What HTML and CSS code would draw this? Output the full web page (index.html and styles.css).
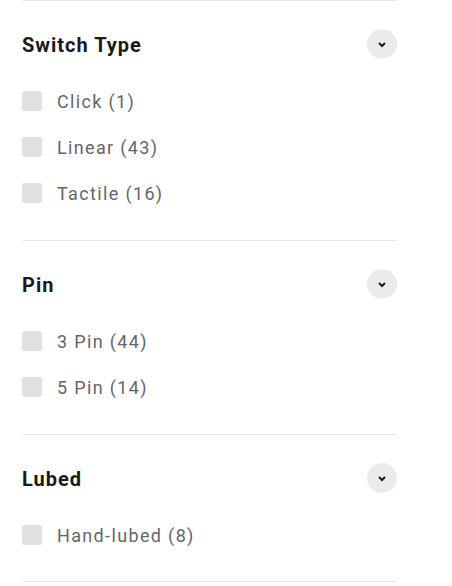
FILE: index.html
```html
<!DOCTYPE html>
<html lang="en">
<head>
  <meta charset="UTF-8">
  <meta name="viewport" content="width=device-width, initial-scale=1.0">
  <title>Filters</title>
  <link rel="stylesheet" href="styles.css">
</head>
<body>
  <div class="filters">

    <div class="filter-group">
      <div class="filter-header">
        <h3>Switch Type</h3>
        <button class="toggle" aria-label="Toggle">
          <svg width="10" height="7" viewBox="0 0 10 7"><path d="M2 2l3 3 3-3" fill="none" stroke="#1a1a1a" stroke-width="2"/></svg>
        </button>
      </div>
      <ul class="filter-list">
        <li><label><span class="box"></span>Click (1)</label></li>
        <li><label><span class="box"></span>Linear (43)</label></li>
        <li><label><span class="box"></span>Tactile (16)</label></li>
      </ul>
    </div>

    <div class="filter-group">
      <div class="filter-header">
        <h3>Pin</h3>
        <button class="toggle" aria-label="Toggle">
          <svg width="10" height="7" viewBox="0 0 10 7"><path d="M2 2l3 3 3-3" fill="none" stroke="#1a1a1a" stroke-width="2"/></svg>
        </button>
      </div>
      <ul class="filter-list">
        <li><label><span class="box"></span>3 Pin (44)</label></li>
        <li><label><span class="box"></span>5 Pin (14)</label></li>
      </ul>
    </div>

    <div class="filter-group last">
      <div class="filter-header">
        <h3>Lubed</h3>
        <button class="toggle" aria-label="Toggle">
          <svg width="10" height="7" viewBox="0 0 10 7"><path d="M2 2l3 3 3-3" fill="none" stroke="#1a1a1a" stroke-width="2"/></svg>
        </button>
      </div>
      <ul class="filter-list">
        <li><label><span class="box"></span>Hand-lubed (8)</label></li>
      </ul>
    </div>

  </div>
</body>
</html>
```

FILE: styles.css
```css
body {
  font-family: Roboto, "Noto Sans", sans-serif;
  background-color: #fff;
  margin: 0;
  padding: 0;
}

.filters {
  width: 375px;
  margin-left: 22px;
}

.filter-group {
  border-top: 1px solid #e6e6e6;
  padding: 28px 0 37px;
}

.filter-group.last {
  border-bottom: 1px solid #e6e6e6;
  padding-bottom: 36px;
}

.filter-header {
  display: flex;
  align-items: center;
  justify-content: space-between;
  height: 30px;
}

.filter-header h3 {
  margin: 1px 0 0;
  font-size: 20px;
  font-weight: 700;
  letter-spacing: 1px;
  color: #1a1a1a;
}

.toggle {
  width: 30px;
  height: 30px;
  border: none;
  border-radius: 50%;
  background-color: #ebebeb;
  padding: 0;
  display: flex;
  align-items: center;
  justify-content: center;
  cursor: pointer;
}

.filter-list {
  list-style-type: none;
  margin: 32px 0 0;
  padding: 0;
  display: flex;
  flex-direction: column;
  gap: 26px;
}

.filter-list li {
  height: 20px;
}

.filter-list label {
  display: flex;
  align-items: center;
  height: 20px;
  font-size: 18px;
  letter-spacing: 1.35px;
  color: #666;
  cursor: pointer;
}

.box {
  width: 20px;
  height: 20px;
  border-radius: 3px;
  background-color: #e0e0e0;
  margin-right: 15px;
  flex-shrink: 0;
}
```
